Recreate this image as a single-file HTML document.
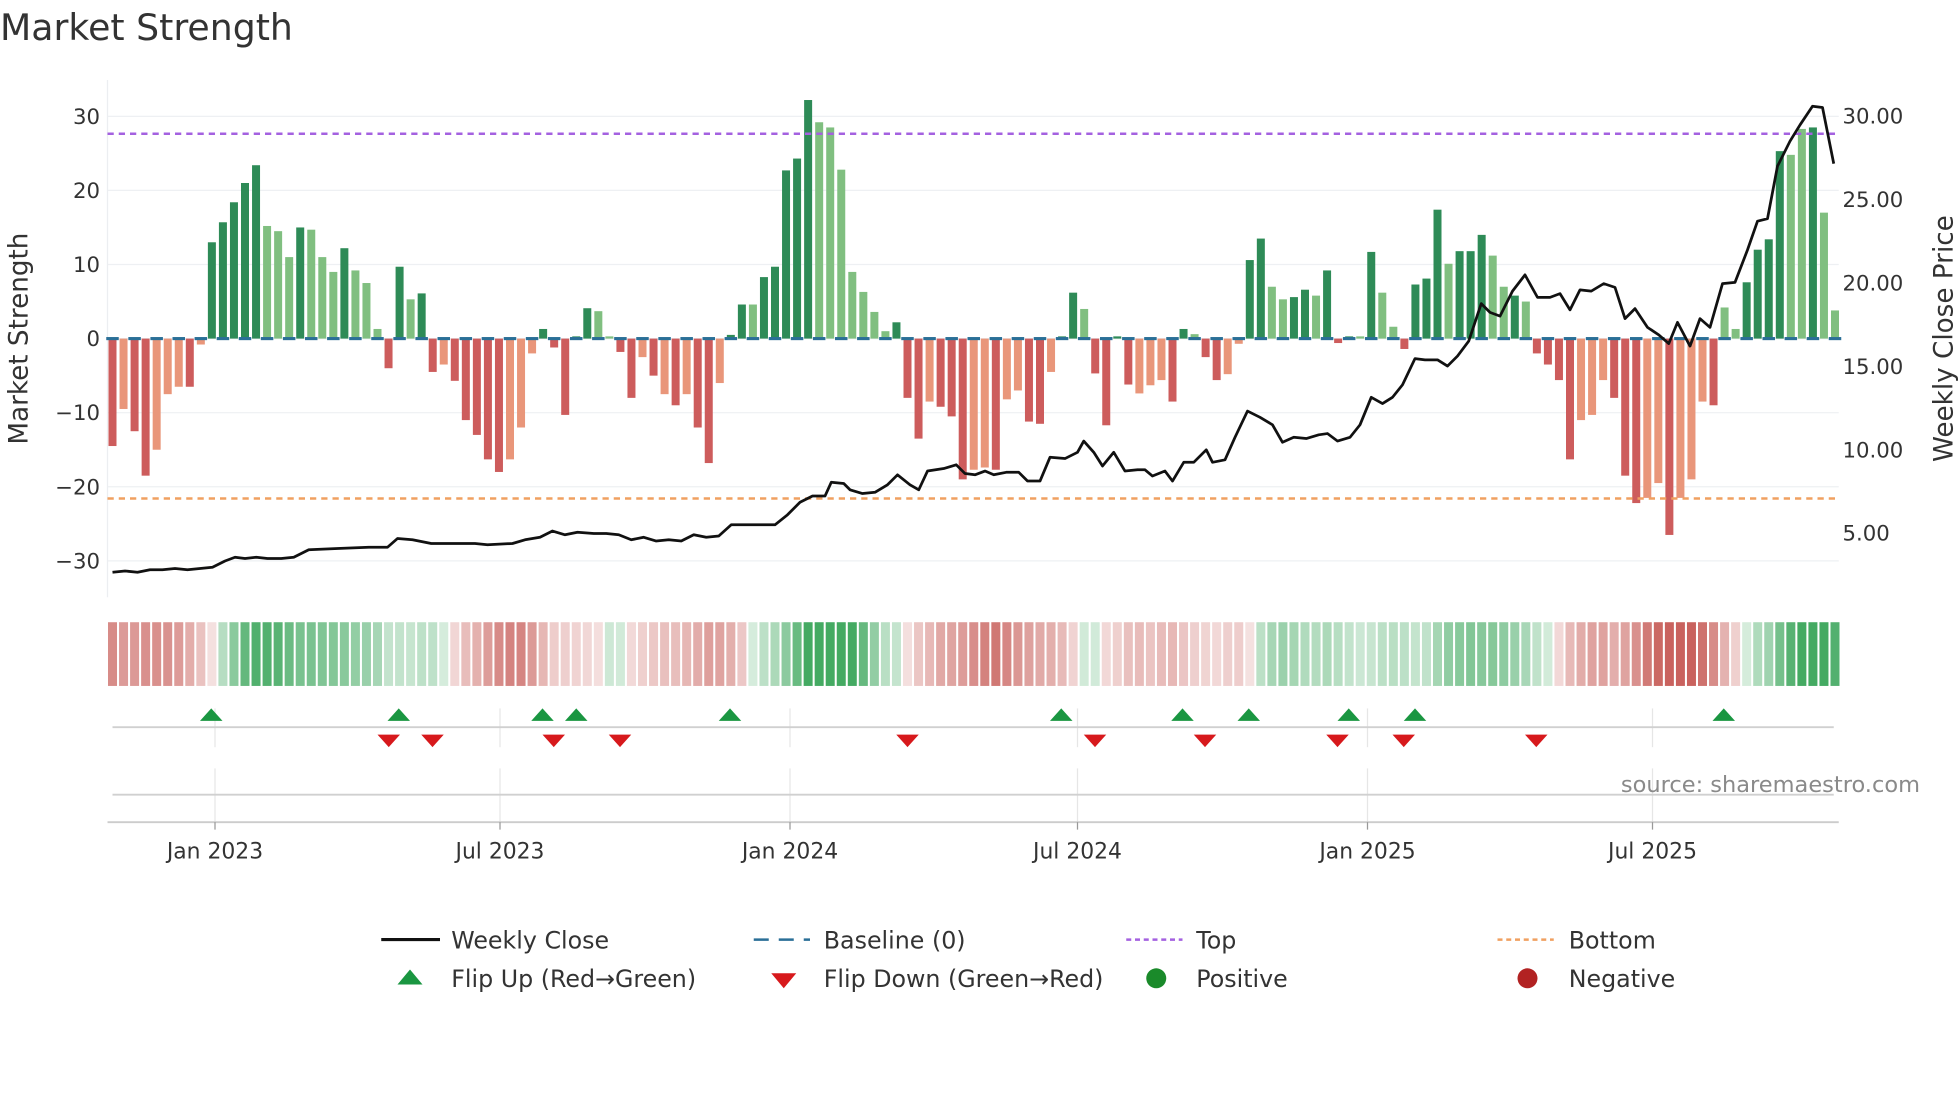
<!DOCTYPE html>
<html><head><meta charset="utf-8"><style>
html,body{margin:0;padding:0;background:#fff;}
svg{display:block;font-family:"DejaVu Sans","Liberation Sans",sans-serif;}
</style></head><body>
<svg id="c" width="1960" height="1102" viewBox="0 0 1568 882" preserveAspectRatio="none" xmlns="http://www.w3.org/2000/svg">
<text x="0" y="32" font-size="29" fill="#333">Market Strength</text>
<g id="grid" stroke="#eef0f3" stroke-width="1"></g>
<line x1="86" y1="64" x2="86" y2="478" stroke="#eceef1"/>
<g id="bars"></g>
<g id="strip"></g>
<line x1="86" y1="107" x2="1471" y2="107" stroke="#a461e0" stroke-width="2" stroke-dasharray="5,4"/>
<line x1="86" y1="399" x2="1471" y2="399" stroke="#f0a060" stroke-width="2" stroke-dasharray="5,4"/>
<polyline id="price" fill="none" stroke="#111" stroke-width="2.2" stroke-linejoin="round"></polyline>
<g font-size="17" fill="#333" text-anchor="end" id="ly"></g>
<g font-size="17" fill="#333" id="ry"></g>
<text transform="translate(22,271) rotate(-90)" text-anchor="middle" font-size="21" fill="#333">Market Strength</text>
<text transform="translate(1562,271) rotate(-90)" text-anchor="middle" font-size="21" fill="#333">Weekly Close Price</text>
<g id="vt" stroke="#e6e6e6"></g>
<line x1="90" y1="582" x2="1467" y2="582" stroke="#d0d0d0" stroke-width="1.5"/>
<line x1="90" y1="636" x2="1467" y2="636" stroke="#d0d0d0" stroke-width="1.5"/>
<line x1="86" y1="658" x2="1471" y2="658" stroke="#ccc" stroke-width="1.5"/>
<g id="flips"></g>
<text x="1536" y="634" text-anchor="end" font-size="18" fill="#8a8a8a">source: sharemaestro.com</text>
<g id="xt" font-size="17.5" fill="#333" text-anchor="middle"></g>
<g font-size="19" fill="#333">
<line x1="305" y1="752" x2="352" y2="752" stroke="#111" stroke-width="2.5"/>
<text x="361" y="759">Weekly Close</text>
<line x1="603" y1="752" x2="648" y2="752" stroke="#2a6f97" stroke-width="2" stroke-dasharray="12,8"/>
<text x="659" y="759">Baseline (0)</text>
<line x1="901" y1="752" x2="946" y2="752" stroke="#a461e0" stroke-width="2" stroke-dasharray="4,3"/>
<text x="957" y="759">Top</text>
<line x1="1198" y1="752" x2="1243" y2="752" stroke="#f0a060" stroke-width="2" stroke-dasharray="4,3"/>
<text x="1255" y="759">Bottom</text>
<polygon points="318,788 338,788 328,776" fill="#1a9641"/>
<text x="361" y="790">Flip Up (Red→Green)</text>
<polygon points="617,779 637,779 627,791" fill="#d7191c"/>
<text x="659" y="790">Flip Down (Green→Red)</text>
<circle cx="925" cy="783" r="8" fill="#1a8a2a"/>
<text x="957" y="790">Positive</text>
<circle cx="1222" cy="783" r="8" fill="#b22222"/>
<text x="1255" y="790">Negative</text>
</g>
</svg>
<script>
var NS="http://www.w3.org/2000/svg";
function el(p,t,a,txt){var e=document.createElementNS(NS,t);for(var k in a)e.setAttribute(k,a[k]);if(txt!=null)e.textContent=txt;document.getElementById(p).appendChild(e);return e;}
var Y=function(v){return 271-v*5.93;};
[30,20,10,0,-10,-20,-30].forEach(function(v){el("grid","line",{x1:86,x2:1471,y1:Y(v),y2:Y(v)});el("ly","text",{x:80,y:Y(v)+6},(v<0?"\u2212":"")+Math.abs(v));});
[30,25,20,15,10,5].forEach(function(p){var y=93+(30-p)*13.35;el("ry","text",{x:1474,y:y+6},p.toFixed(2));});
var D="-14.5 o,-9.5 p,-12.5 o,-18.5 o,-15 p,-7.5 p,-6.5 p,-6.5 o,-0.8 p,13 d,15.7 d,18.4 d,21 d,23.4 d,15.2 l,14.5 l,11 l,15 d,14.7 l,11 l,9 l,12.2 d,9.2 l,7.5 l,1.3 l,-4 o,9.7 d,5.3 l,6.1 d,-4.5 o,-3.5 p,-5.7 o,-11 o,-13 o,-16.3 o,-18 o,-16.3 p,-12 p,-2 p,1.3 d,-1.2 o,-10.3 o,0.3 d,4.1 d,3.7 l,0.3 l,-1.8 o,-8 o,-2.5 p,-5 o,-7.5 p,-9 o,-7.5 p,-12 o,-16.8 o,-6 p,0.5 d,4.6 d,4.6 l,8.3 d,9.7 d,22.7 d,24.3 d,32.2 d,29.2 l,28.5 l,22.8 l,9 l,6.3 l,3.6 l,1 l,2.2 d,-8 o,-13.5 o,-8.5 p,-9.2 o,-10.5 o,-19 o,-17.7 p,-17.4 p,-17.7 o,-8.2 p,-7 p,-11.2 o,-11.5 o,-4.5 p,0.3 d,6.2 d,4 l,-4.7 o,-11.7 o,0.3 d,-6.2 o,-7.4 p,-6.3 p,-5.6 p,-8.5 o,1.3 d,0.6 l,-2.5 o,-5.6 o,-4.8 p,-0.7 p,10.6 d,13.5 d,7 l,5.3 l,5.6 d,6.6 d,5.8 l,9.2 d,-0.6 o,0.3 d,0.3 l,11.7 d,6.2 l,1.6 l,-1.4 o,7.3 d,8.1 d,17.4 d,10.1 l,11.8 d,11.8 d,14 d,11.2 l,7 l,5.8 d,5 l,-2 o,-3.5 o,-5.6 o,-16.3 o,-11 p,-10.3 p,-5.6 p,-8 o,-18.5 o,-22.2 o,-21.5 p,-19.5 p,-26.5 o,-21.5 p,-19 p,-8.5 p,-9 o,4.2 l,1.3 l,7.6 d,12 d,13.4 d,25.3 d,24.8 l,28.3 l,28.5 d,17 l,3.8 l".split(",");
var C={d:"#2e8b57",l:"#80bf80",o:"#cd5c5c",p:"#e9967a"};
var vals=D.map(function(s){return parseFloat(s);});
var n=D.length,step=(1468-90)/(n-1);
D.forEach(function(s,i){var v=vals[i],c=C[s.split(" ")[1]],x=90+i*step;
 var y0=Y(0),y1=Y(v);el("bars","rect",{x:x-3.2,y:Math.min(y0,y1),width:6.4,height:Math.max(1,Math.abs(y1-y0)),fill:c});
 if(i%2==0)el("bars","line",{x1:x-5,x2:x+5,y1:271,y2:271,stroke:"#2a6f97","stroke-width":2.5});
 var m=0,k=0;for(var j=Math.max(0,i-3);j<=i;j++){m+=vals[j];k++;}m/=k;
 var a=Math.min(0.95,0.18+Math.abs(m)/28);
 el("strip","rect",{x:x-3.6,y:498,width:7.2,height:51,fill:m>=0?"#3aa55a":"#c65a55","fill-opacity":a});
});
var P="90,458 100,457 110,458 120,456 130,456 140,455 150,456 160,455 170,454 180,449 188,446 196,447 205,446 214,447 225,447 235,446 247,440 270,439 295,438 310,438 318,431 330,432 345,435 360,435 380,435 390,436 410,435 420,432 432,430 442,425 452,428 462,426 475,427 485,427 495,428 505,432 515,430 525,433 535,432 545,433 555,428 565,430 575,429 585,420 600,420 620,420 630,412 640,402 650,397 660,397 665,386 675,387 680,392 690,395 700,394 710,388 718,380 728,388 735,392 742,377 755,375 765,372 772,379 780,380 788,377 795,380 805,378 815,378 822,385 832,385 840,366 852,367 862,362 867,353 875,362 882,373 891,362 900,377 910,376 916,376 922,381 932,377 938,385 947,370 955,370 965,360 970,370 980,368 988,350 998,329 1008,334 1018,340 1026,354 1035,350 1045,351 1055,348 1062,347 1070,353 1080,350 1088,340 1097,318 1106,323 1114,318 1122,308 1132,287 1140,288 1150,288 1158,293 1166,285 1175,273 1185,243 1192,250 1200,253 1210,233 1220,220 1230,238 1240,238 1248,235 1256,248 1264,232 1273,233 1283,227 1292,230 1300,255 1308,247 1318,262 1327,268 1335,275 1342,258 1352,277 1360,255 1368,262 1378,227 1388,226 1398,200 1406,177 1414,175 1422,133 1432,113 1440,100 1450,85 1458,86 1467,131";
document.getElementById("price").setAttribute("points",P);
[[172,"Jan 2023"],[400,"Jul 2023"],[632,"Jan 2024"],[862,"Jul 2024"],[1094,"Jan 2025"],[1322,"Jul 2025"]].forEach(function(t){
 el("vt","line",{x1:t[0],x2:t[0],y1:567,y2:598});el("vt","line",{x1:t[0],x2:t[0],y1:615,y2:658});
 el("xt","line",{x1:t[0],x2:t[0],y1:658,y2:664,stroke:"#999"});
 el("xt","text",{x:t[0],y:687},t[1]);});
[169,319,434,461,584,849,946,999,1079,1132,1379].forEach(function(x){el("flips","polygon",{points:(x-9)+",577 "+(x+9)+",577 "+x+",567",fill:"#1a9641"});});
[311,346,443,496,726,876,964,1070,1123,1229].forEach(function(x){el("flips","polygon",{points:(x-9)+",588 "+(x+9)+",588 "+x+",598",fill:"#d7191c"});});
</script>
</body></html>
